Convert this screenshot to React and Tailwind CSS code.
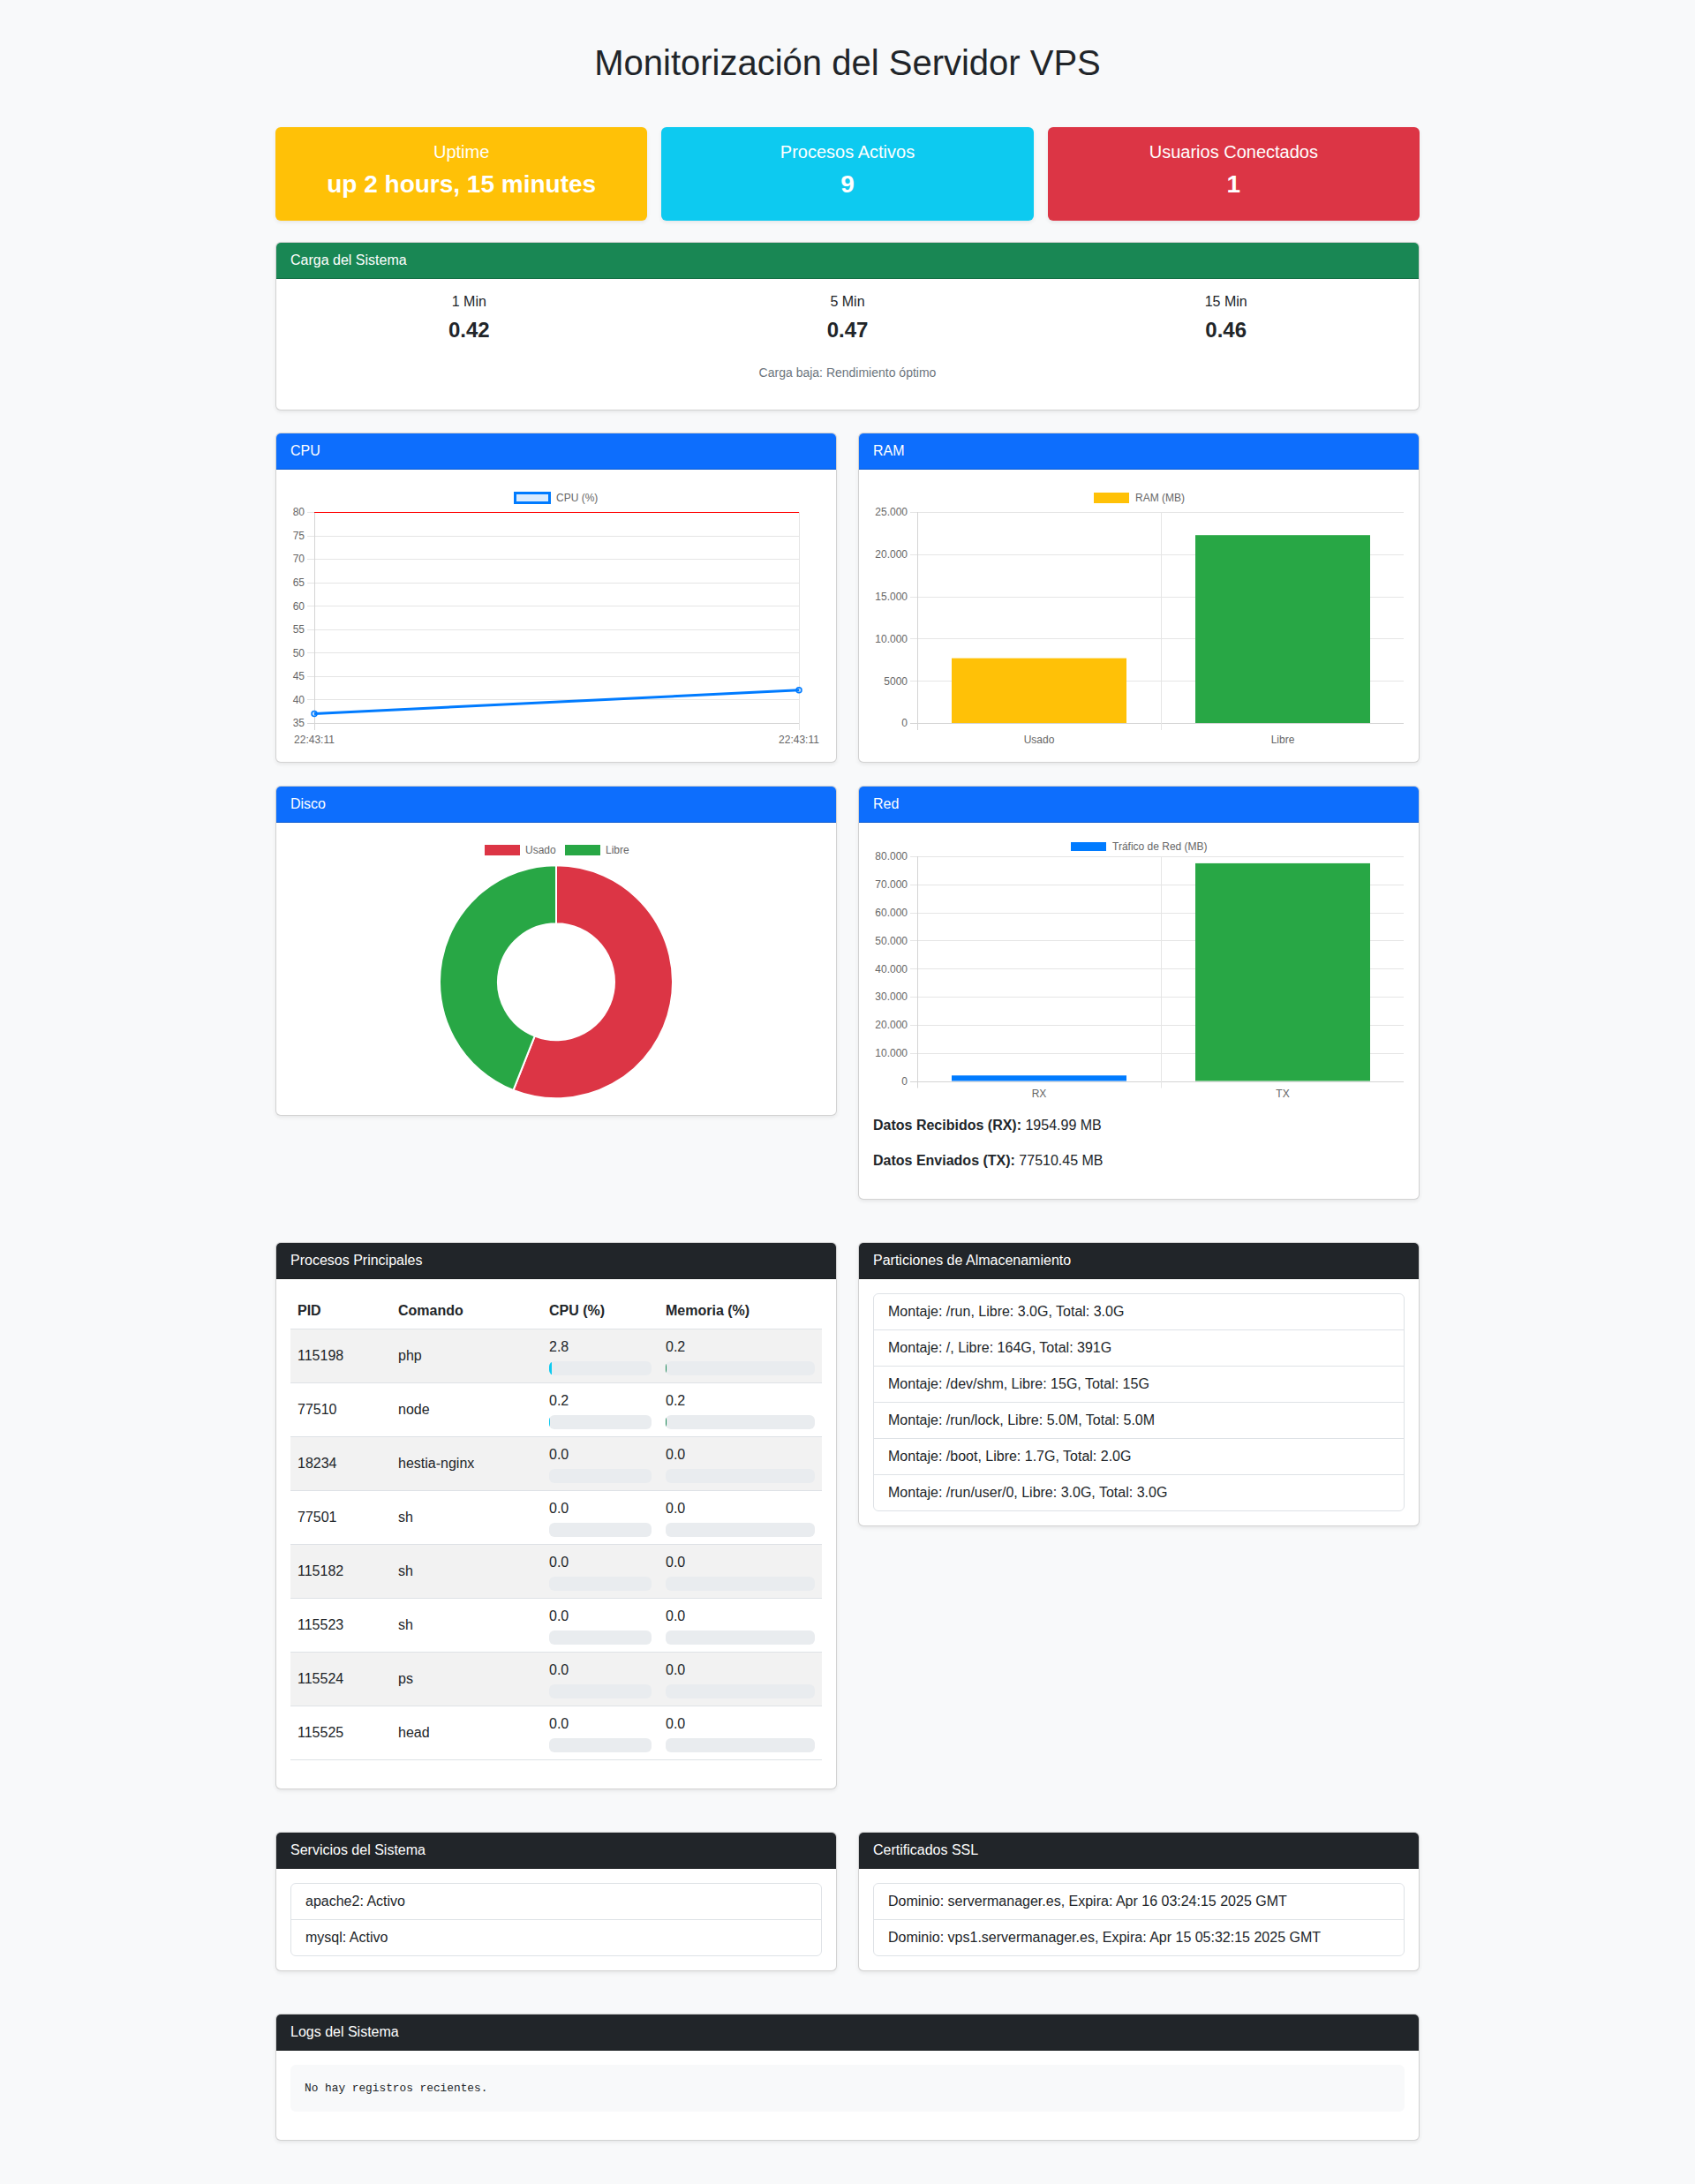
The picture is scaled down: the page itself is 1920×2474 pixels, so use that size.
import React from 'react';

const FONT = "'Liberation Sans', Arial, sans-serif";
const GRID = '#e5e5e5';
const AXIS = '#d4d4d4';

const px = (v) => Math.round(v) + 0.5;

const StatCard = ({ color, label, value }) => (
  <div className={`${color} h-[106px] rounded-md shadow-[0_2px_4px_rgba(0,0,0,0.075)] pt-4 text-center text-white`}>
    <div className="text-[20px] leading-6">{label}</div>
    <div className="mt-2 text-[28px] font-bold leading-[34px]">{value}</div>
  </div>
);

const Card = ({ title, header, children }) => (
  <div className="bg-white border border-[rgba(0,0,0,0.175)] rounded-md shadow-[0_2px_4px_rgba(0,0,0,0.075)] overflow-hidden">
    <div className={`${header} h-[41px] px-4 flex items-center text-white text-base border-b border-[rgba(0,0,0,0.175)]`}>
      {title}
    </div>
    <div className="p-4">{children}</div>
  </div>
);

// CPU line chart
const CpuChart = () => {
  const top = 32;
  const bottom = 271;
  const left = 27;
  const right = 576;
  const ticks = [80, 75, 70, 65, 60, 55, 50, 45, 40, 35];
  const y = (v) => bottom - ((v - 35) / 45) * (bottom - top);

  return (
    <svg width="602" height="299" className="block" fontFamily={FONT} fontSize="12">
      <rect x="254.5" y="10.5" width="39" height="11" fill="rgba(0,123,255,0.15)" stroke="#007bff" strokeWidth="3" />
      <text x="301" y="19.5" fill="#666">CPU (%)</text>

      {ticks.map((t) => (
        <g key={t}>
          <line x1="19" x2={right} y1={px(y(t))} y2={px(y(t))} stroke={t === 35 ? AXIS : GRID} />
          <text x="16" y={y(t) + 4.3} textAnchor="end" fill="#666">{t}</text>
        </g>
      ))}
      <line x1={px(left)} x2={px(left)} y1={top} y2={bottom + 8} stroke={AXIS} />
      <line x1={px(right)} x2={px(right)} y1={top} y2={bottom + 8} stroke={GRID} />
      <line x1={left} x2={right} y1={px(top)} y2={px(top)} stroke="#ff0000" />

      <line x1={left} y1={y(37)} x2={right} y2={y(42)} stroke="#007bff" strokeWidth="3" />
      <circle cx={left} cy={y(37)} r="3" fill="rgba(0,123,255,0.25)" stroke="#007bff" strokeWidth="1.5" />
      <circle cx={right} cy={y(42)} r="3" fill="rgba(0,123,255,0.25)" stroke="#007bff" strokeWidth="1.5" />

      <text x={left} y="293.5" textAnchor="middle" fill="#666">22:43:11</text>
      <text x={right} y="293.5" textAnchor="middle" fill="#666">22:43:11</text>
    </svg>
  );
};

// Generic two bar chart (RAM / Red)
const BarChart = ({ legend, legendColor, legendBox, legendTextY, ticks, max, top, bottom, bars, labelY }) => {
  const left = 50;
  const mid = 326;
  const right = 601;
  const y = (v) => bottom - (v / max) * (bottom - top);

  return (
    <svg width="602" height="299" className="block" fontFamily={FONT} fontSize="12">
      <rect x={legendBox.x} y={legendBox.y} width="40" height={legendBox.h} fill={legendColor} />
      <text x={legendBox.x + 47} y={legendTextY} fill="#666">{legend}</text>

      {ticks.map(([v, label]) => (
        <g key={label}>
          <line x1="42" x2={right} y1={px(y(v))} y2={px(y(v))} stroke={v === 0 ? AXIS : GRID} />
          <text x="39" y={y(v) + 4.3} textAnchor="end" fill="#666">{label}</text>
        </g>
      ))}
      <line x1={px(left)} x2={px(left)} y1={top} y2={bottom + 8} stroke={AXIS} />
      <line x1={px(mid)} x2={px(mid)} y1={top} y2={bottom + 8} stroke={GRID} />

      {bars.map((b, i) => (
        <rect key={b.label} x={i === 0 ? 89 : 365} width="198" y={y(b.value)} height={bottom - y(b.value)} fill={b.color} />
      ))}

      <text x="188" y={labelY} textAnchor="middle" fill="#666">{bars[0].label}</text>
      <text x="464" y={labelY} textAnchor="middle" fill="#666">{bars[1].label}</text>
    </svg>
  );
};

// Disk doughnut
const DiskChart = () => (
  <svg width="602" height="299" className="block" fontFamily={FONT} fontSize="12">
    <rect x="220" y="9" width="40" height="12" fill="#dc3545" />
    <text x="266" y="18.5" fill="#666">Usado</text>
    <rect x="311" y="9" width="40" height="12" fill="#28a745" />
    <text x="357" y="18.5" fill="#666">Libre</text>

    <path
      d="M301 32.3 A132 132 0 1 1 252.41 287.03 L276.71 225.67 A66 66 0 1 0 301 98.3 Z"
      fill="#dc3545"
      stroke="#fff"
      strokeWidth="2"
      strokeLinejoin="round"
    />
    <path
      d="M252.41 287.03 A132 132 0 0 1 301 32.3 L301 98.3 A66 66 0 0 0 276.71 225.67 Z"
      fill="#28a745"
      stroke="#fff"
      strokeWidth="2"
      strokeLinejoin="round"
    />
  </svg>
);

const procesos = [
  ['115198', 'php', 2.8, 0.2],
  ['77510', 'node', 0.2, 0.2],
  ['18234', 'hestia-nginx', 0.0, 0.0],
  ['77501', 'sh', 0.0, 0.0],
  ['115182', 'sh', 0.0, 0.0],
  ['115523', 'sh', 0.0, 0.0],
  ['115524', 'ps', 0.0, 0.0],
  ['115525', 'head', 0.0, 0.0],
];

const particiones = [
  'Montaje: /run, Libre: 3.0G, Total: 3.0G',
  'Montaje: /, Libre: 164G, Total: 391G',
  'Montaje: /dev/shm, Libre: 15G, Total: 15G',
  'Montaje: /run/lock, Libre: 5.0M, Total: 5.0M',
  'Montaje: /boot, Libre: 1.7G, Total: 2.0G',
  'Montaje: /run/user/0, Libre: 3.0G, Total: 3.0G',
];

const ListGroup = ({ items }) => (
  <ul className="border border-[#dee2e6] rounded-md">
    {items.map((item, i) => (
      <li key={i} className={`px-4 py-2 leading-6 ${i > 0 ? 'border-t border-[#dee2e6]' : ''}`}>
        {item}
      </li>
    ))}
  </ul>
);

const Progress = ({ value, color }) => (
  <div className="mt-1 h-4 rounded-md bg-[#e9ecef] overflow-hidden">
    <div className={`h-full ${color}`} style={{ width: `${value}%` }} />
  </div>
);

export default function App() {
  return (
    <div className="min-h-[2474px] bg-[#f8f9fa] text-[#212529] font-['Liberation_Sans',Arial,sans-serif] text-base">
      <div className="w-[1296px] mx-auto pt-[47px] pb-[47px]">
        <h1 className="text-[40px] leading-[48px] text-center mb-[49px]">Monitorización del Servidor VPS</h1>

        {/* Resumen */}
        <div className="grid grid-cols-3 gap-4 mb-6">
          <StatCard color="bg-[#ffc107]" label="Uptime" value="up 2 hours, 15 minutes" />
          <StatCard color="bg-[#0dcaf0]" label="Procesos Activos" value="9" />
          <StatCard color="bg-[#dc3545]" label="Usuarios Conectados" value="1" />
        </div>

        {/* Carga */}
        <div className="mb-[25px]">
          <div className="bg-white border border-[rgba(0,0,0,0.175)] rounded-md shadow-[0_2px_4px_rgba(0,0,0,0.075)] overflow-hidden">
            <div className="bg-[#198754] h-[41px] px-4 flex items-center text-white border-b border-[rgba(0,0,0,0.175)]">
              Carga del Sistema
            </div>
            <div className="px-4 pt-[14px] pb-4">
              <div className="grid grid-cols-3 -mx-3 text-center">
                {[['1 Min', '0.42'], ['5 Min', '0.47'], ['15 Min', '0.46']].map(([l, v]) => (
                  <div key={l}>
                    <div className="leading-6">{l}</div>
                    <div className="mt-[5px] text-[24px] font-bold leading-[29px]">{v}</div>
                  </div>
                ))}
              </div>
              <div className="mt-6 mb-[15px] text-center text-[14px] leading-[21px] text-[#6c757d]">
                Carga baja: Rendimiento óptimo
              </div>
            </div>
          </div>
        </div>

        {/* CPU / RAM */}
        <div className="grid grid-cols-2 gap-6 items-start mb-[26px]">
          <Card title="CPU" header="bg-[#0d6efd]">
            <CpuChart />
          </Card>
          <Card title="RAM" header="bg-[#0d6efd]">
            <BarChart
              legend="RAM (MB)"
              legendColor="#ffc107"
              legendBox={{ x: 250, y: 10, h: 12 }}
              legendTextY={19.5}
              max={25000}
              top={32}
              bottom={271}
              ticks={[[25000, '25.000'], [20000, '20.000'], [15000, '15.000'], [10000, '10.000'], [5000, '5000'], [0, '0']]}
              bars={[
                { label: 'Usado', value: 7677, color: '#ffc107' },
                { label: 'Libre', value: 22260, color: '#28a745' },
              ]}
              labelY={293.5}
            />
          </Card>
        </div>

        {/* Disco / Red */}
        <div className="grid grid-cols-2 gap-6 items-start mb-[48px]">
          <Card title="Disco" header="bg-[#0d6efd]">
            <DiskChart />
          </Card>
          <Card title="Red" header="bg-[#0d6efd]">
            <BarChart
              legend="Tráfico de Red (MB)"
              legendColor="#007bff"
              legendBox={{ x: 224, y: 6, h: 10 }}
              legendTextY={14.8}
              max={80000}
              top={22}
              bottom={276.5}
              ticks={[
                [80000, '80.000'], [70000, '70.000'], [60000, '60.000'], [50000, '50.000'],
                [40000, '40.000'], [30000, '30.000'], [20000, '20.000'], [10000, '10.000'], [0, '0'],
              ]}
              bars={[
                { label: 'RX', value: 1954.99, color: '#007bff' },
                { label: 'TX', value: 77510.45, color: '#28a745' },
              ]}
              labelY={294.5}
            />
            <div className="mt-4 leading-6">
              <strong>Datos Recibidos (RX):</strong> 1954.99 MB
            </div>
            <div className="mt-4 mb-[15px] leading-6">
              <strong>Datos Enviados (TX):</strong> 77510.45 MB
            </div>
          </Card>
        </div>

        {/* Procesos / Particiones */}
        <div className="grid grid-cols-2 gap-6 items-start mb-[48px]">
          <Card title="Procesos Principales" header="bg-[#212529]">
            <table className="w-full border-collapse mb-4">
              <thead>
                <tr className="border-b border-[#dee2e6]">
                  <th className="w-[114px] px-2 py-2 text-left font-bold leading-6">PID</th>
                  <th className="w-[171px] px-2 py-2 text-left font-bold leading-6">Comando</th>
                  <th className="w-[132px] px-2 py-2 text-left font-bold leading-6">CPU (%)</th>
                  <th className="px-2 py-2 text-left font-bold leading-6">Memoria (%)</th>
                </tr>
              </thead>
              <tbody>
                {procesos.map(([pid, cmd, cpu, mem], i) => (
                  <tr key={pid} className={`border-b border-[#dee2e6] ${i % 2 === 0 ? 'bg-[#f2f2f2]' : 'bg-white'}`}>
                    <td className="px-2 py-2 align-middle leading-6">{pid}</td>
                    <td className="px-2 py-2 align-middle leading-6">{cmd}</td>
                    <td className="px-2 py-2 align-middle">
                      <div className="leading-6">{cpu.toFixed(1)}</div>
                      <Progress value={cpu} color="bg-[#0dcaf0]" />
                    </td>
                    <td className="px-2 py-2 align-middle">
                      <div className="leading-6">{mem.toFixed(1)}</div>
                      <Progress value={mem} color="bg-[#198754]" />
                    </td>
                  </tr>
                ))}
              </tbody>
            </table>
          </Card>
          <Card title="Particiones de Almacenamiento" header="bg-[#212529]">
            <ListGroup items={particiones} />
          </Card>
        </div>

        {/* Servicios / SSL */}
        <div className="grid grid-cols-2 gap-6 items-start mb-[48px]">
          <Card title="Servicios del Sistema" header="bg-[#212529]">
            <ListGroup items={['apache2: Activo', 'mysql: Activo']} />
          </Card>
          <Card title="Certificados SSL" header="bg-[#212529]">
            <ListGroup
              items={[
                'Dominio: servermanager.es, Expira: Apr 16 03:24:15 2025 GMT',
                'Dominio: vps1.servermanager.es, Expira: Apr 15 05:32:15 2025 GMT',
              ]}
            />
          </Card>
        </div>

        {/* Logs */}
        <Card title="Logs del Sistema" header="bg-[#212529]">
          <pre className="mb-4 p-4 bg-[#f8f9fa] rounded-md font-['Liberation_Mono',monospace] text-[12.8px] leading-[21px]">
            No hay registros recientes.
          </pre>
        </Card>
      </div>
    </div>
  );
}
